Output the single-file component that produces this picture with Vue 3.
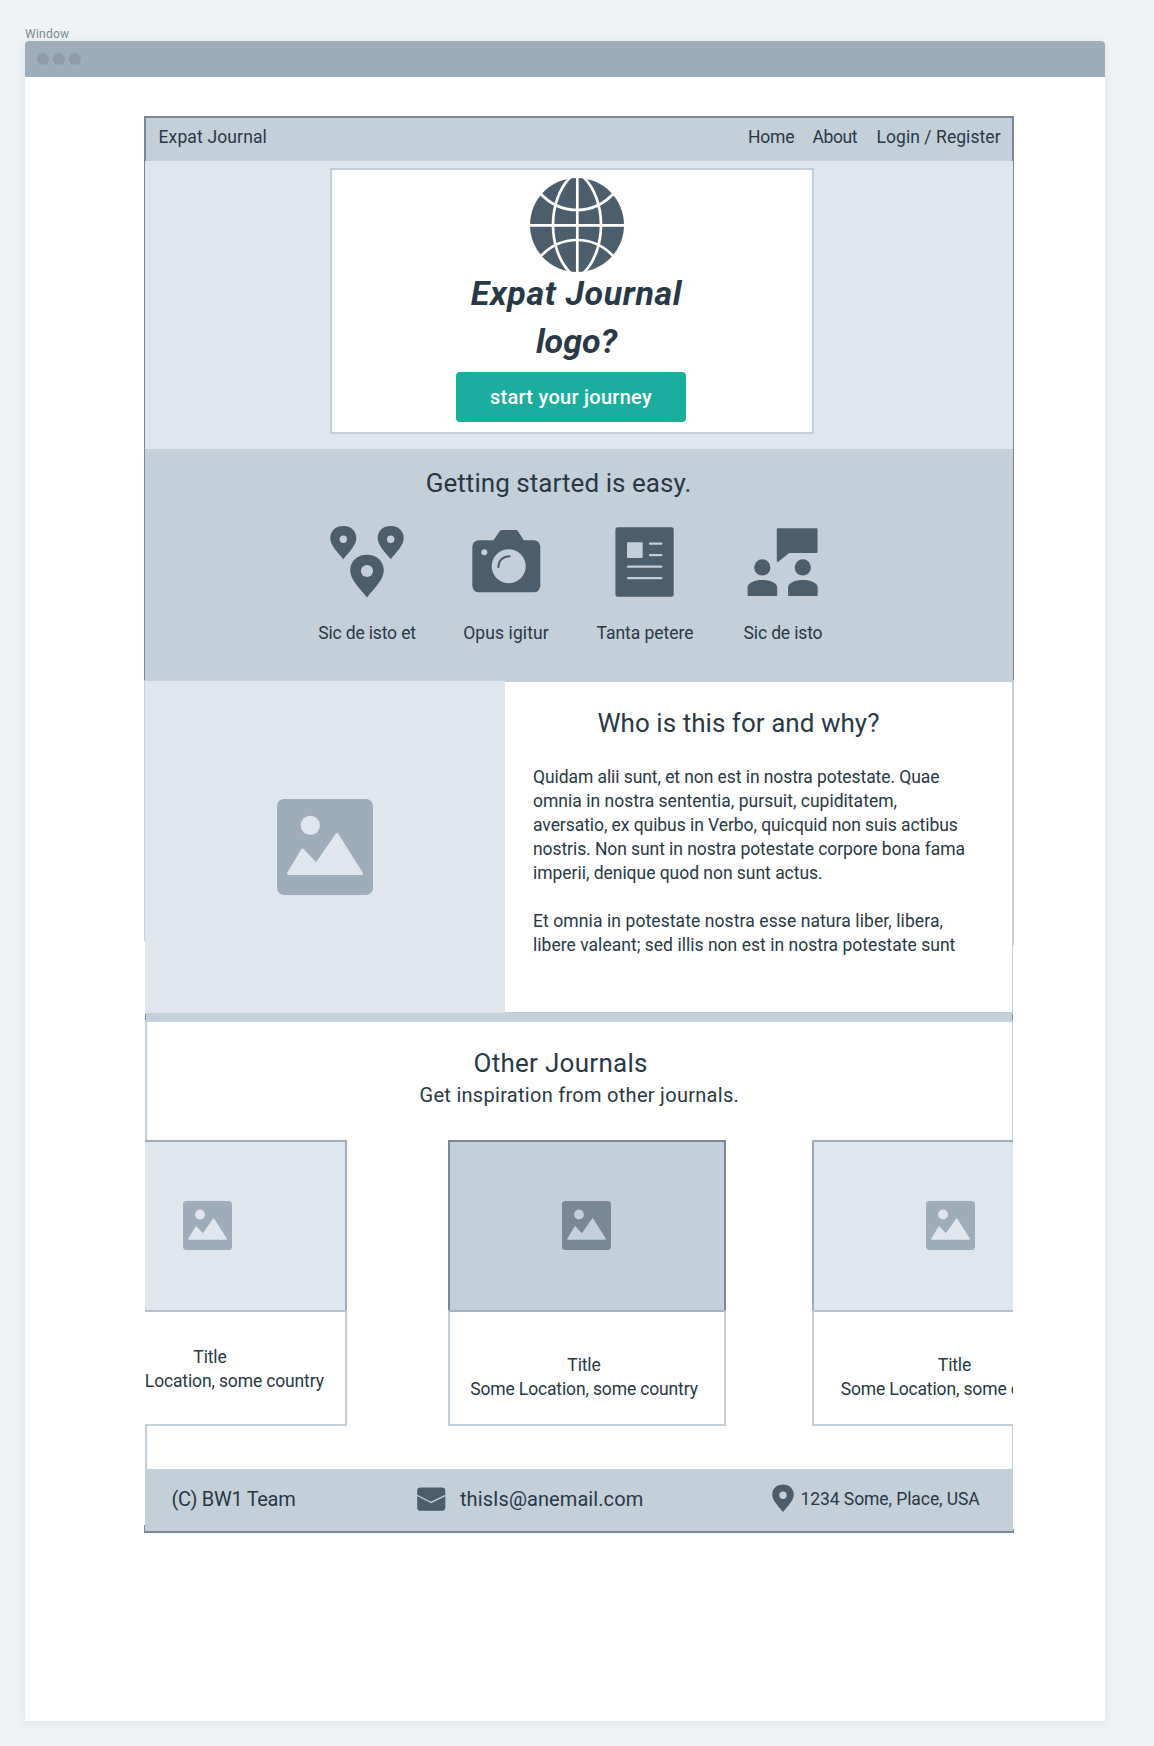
<script setup>
import { h } from 'vue'

const features = [
  { icon: 'places', label: 'Sic de isto et', spacing: -0.15 },
  { icon: 'camera', label: 'Opus igitur', spacing: 0.11 },
  { icon: 'article', label: 'Tanta petere', spacing: -0.03 },
  { icon: 'people', label: 'Sic de isto', spacing: -0.15 },
]

const paragraphs = [
  [
    { text: 'Quidam alii sunt, et non est in nostra potestate. Quae', spacing: -0.075 },
    { text: 'omnia in nostra sententia, pursuit, cupiditatem,', spacing: 0.02 },
    { text: 'aversatio, ex quibus in Verbo, quicquid non suis actibus', spacing: -0.063 },
    { text: 'nostris. Non sunt in nostra potestate corpore bona fama', spacing: -0.075 },
    { text: 'imperii, denique quod non sunt actus.', spacing: -0.03 },
  ],
  [
    { text: 'Et omnia in potestate nostra esse natura liber, libera,', spacing: 0.09 },
    { text: 'libere valeant; sed illis non est in nostra potestate sunt', spacing: 0.025 },
  ],
]

const journals = [
  { kind: 'previous', title: 'Title', place: 'Some Location, some country' },
  { kind: 'current', title: 'Title', place: 'Some Location, some country' },
  { kind: 'next', title: 'Title', place: 'Some Location, some country' },
]

const PIN = 'M0 42.7C-8 33-16.8 24.5-16.8 15.8C-16.8 6-9.5 0 0 0S16.8 6 16.8 15.8C16.8 24.5 8 33 0 42.7Z'
const BUST = 'M4.6 67.5C4.6 62.5 12 60 19.3 60S34.2 62.5 34.2 67.5V75.2Q34.2 76 33.4 76H5.4Q4.6 76 4.6 75.2Z'

const PictureIcon = () =>
  h('svg', { viewBox: '0 0 96 96' }, [
    h('rect', { width: 96, height: 96, rx: 7, fill: 'currentColor' }),
    h('circle', { cx: 33.3, cy: 26.4, r: 9.6, fill: 'var(--cut)' }),
    h('path', {
      d: 'M11.5 74.5L25.6 51L39.2 65.5L60 35.5L84.5 74.5Z',
      fill: 'var(--cut)',
      stroke: 'var(--cut)',
      'stroke-width': 3,
      'stroke-linejoin': 'round',
    }),
  ])
</script>

<template>
  <div class="canvas">
    <div class="window-label">Window</div>
    <div class="window">
      <div class="titlebar"><i></i><i></i><i></i></div>

      <div class="site">
        <nav class="nav">
          <span class="brand">Expat Journal</span>
          <a class="home">Home</a>
          <a class="about-link">About</a>
          <a class="login">Login / Register</a>
        </nav>

        <header class="hero">
          <div class="hero-card">
            <svg class="globe" viewBox="-47 -47 94 94">
              <circle r="47" fill="#4c5d6b" />
              <g fill="none" stroke="#fff" stroke-width="2.7">
                <path d="M0.3-48V48M-48 0.3H48" />
                <path d="M-6-48.5C-18-37-24-18-24 0S-18 37-6 48.5M6-48.5C18-37 24-18 24 0S18 37 6 48.5" />
                <path d="M-38-33C-27-20.5-14-15 0-15S27-20.5 38-33M-38 33C-27 20.5-14 15 0 15S27 20.5 38 33" />
              </g>
            </svg>
            <h1><span class="wide">Expat Journal</span><span>logo?</span></h1>
            <button type="button">start your journey</button>
          </div>
        </header>

        <section class="features">
          <h2>Getting started is easy.</h2>
          <div class="feature-row">
            <div v-for="f in features" :key="f.icon" class="feature">
              <svg v-if="f.icon === 'places'" viewBox="0 0 80 80">
                <g fill="#4c5d6b">
                  <path :d="PIN" transform="translate(16.3 6) scale(.776)" />
                  <path :d="PIN" transform="translate(63.7 6) scale(.776)" />
                  <path :d="PIN" transform="translate(40 34.8)" />
                </g>
                <g fill="#c3cfd9">
                  <circle cx="16.3" cy="19.3" r="3.7" />
                  <circle cx="63.7" cy="19.3" r="3.7" />
                  <circle cx="40" cy="51" r="6.1" />
                </g>
              </svg>
              <svg v-else-if="f.icon === 'camera'" viewBox="0 0 80 80">
                <rect x="6.3" y="20.3" width="68" height="52" rx="6.5" fill="#4c5d6b" />
                <path d="M27 21L33.6 11.3Q34.4 10 36 10H50Q51.3 10 52 11.2L58.3 21Z" fill="#4c5d6b" />
                <circle cx="42.7" cy="46.3" r="17" fill="#c3cfd9" />
                <circle cx="18.3" cy="32.3" r="3" fill="#c3cfd9" />
                <path d="M32.4 47.3C32.4 40.5 37 36.2 43.6 36.2" fill="none" stroke="#4c5d6b" stroke-width="2" stroke-linecap="round" />
              </svg>
              <svg v-else-if="f.icon === 'article'" viewBox="0 0 80 80">
                <rect x="10.4" y="7.3" width="58.3" height="69.4" rx="2.2" fill="#4c5d6b" />
                <rect x="22" y="22.3" width="15.7" height="15.7" rx="1" fill="#c3cfd9" />
                <path d="M45 23.7H56.4M45 35.1H56.4M23 46.7H56.4M23 58.1H56.4" stroke="#c3cfd9" stroke-width="2.3" stroke-linecap="round" />
              </svg>
              <svg v-else viewBox="0 0 80 80">
                <g fill="#4c5d6b">
                  <path d="M34.6 8.3H73.7Q74.5 8.3 74.5 9.1V32.2Q74.5 33 73.7 33H46.2L35.2 41.7Q33.8 42.4 33.8 41V9.1Q33.8 8.3 34.6 8.3Z" />
                  <circle cx="19.3" cy="47.4" r="8.1" />
                  <circle cx="59.8" cy="47.4" r="8.1" />
                  <path :d="BUST" />
                  <path :d="BUST" transform="translate(40.5 0)" />
                </g>
              </svg>
              <span :style="{ letterSpacing: f.spacing + 'px' }">{{ f.label }}</span>
            </div>
          </div>
        </section>

        <section class="about">
          <div class="about-picture"><PictureIcon class="picture-lg" /></div>
          <div class="about-copy">
            <h2>Who is this for and why?</h2>
            <p v-for="(lines, i) in paragraphs" :key="i">
              <span v-for="line in lines" :key="line.text" :style="{ letterSpacing: line.spacing + 'px' }">{{ line.text }}</span>
            </p>
          </div>
        </section>

        <div class="band"></div>

        <section class="others">
          <h2>Other Journals</h2>
          <p class="lead">Get inspiration from other journals.</p>
          <div class="carousel">
            <article v-for="j in journals" :key="j.kind" class="card" :class="j.kind">
              <div class="card-picture"><PictureIcon class="picture-sm" /></div>
              <div class="card-body">
                <div>{{ j.title }}</div>
                <div>{{ j.place }}</div>
              </div>
            </article>
          </div>
        </section>

        <footer class="footer">
          <span class="copyright">(C) BW1 Team</span>
          <svg class="mail" viewBox="0 0 28.5 24">
            <rect x="0.2" y="0.5" width="28.1" height="23.3" rx="3.4" fill="#4c5d6b" />
            <path d="M0 8.3L14.2 15.5L28.5 8.3" fill="none" stroke="#c3cfd9" stroke-width="1.4" />
          </svg>
          <span class="email">thisIs@anemail.com</span>
          <svg class="pin" viewBox="0 0 22 28">
            <path :d="PIN" transform="translate(11 .6) scale(.64)" fill="#4c5d6b" />
            <circle cx="11" cy="11.3" r="3.7" fill="#c3cfd9" />
          </svg>
          <span class="address">1234 Some, Place, USA</span>
        </footer>
      </div>
    </div>
  </div>
</template>

<style>
body {
  margin: 0;
  background: #eff3f6;
}
</style>

<style scoped>
.canvas {
  box-sizing: border-box;
  width: 1154px;
  height: 1746px;
  padding: 26px 49px 0 25px;
  overflow: hidden;
  background: #eff3f6;
  color: #293845;
  font: 17.5px/24px Roboto, "Liberation Sans", sans-serif;
  white-space: nowrap;
}
.canvas * {
  box-sizing: border-box;
}
svg {
  display: block;
  flex: none;
}
h1,
h2,
p {
  margin: 0;
}
h2 {
  font-size: 26px;
  line-height: 32px;
  font-weight: 400;
}
.window-label {
  height: 15px;
  font-size: 12px;
  line-height: 17px;
  letter-spacing: 0.24px;
  color: #788896;
}
.window {
  height: 1680px;
  border-radius: 4px 4px 0 0;
  background: #fff;
  box-shadow: 0 2px 10px rgba(40, 56, 69, 0.08);
}
.titlebar {
  display: flex;
  align-items: center;
  gap: 4px;
  height: 36px;
  padding-left: 12px;
  border-radius: 4px 4px 0 0;
  background: #9eadba;
}
.titlebar i {
  width: 12px;
  height: 12px;
  border-radius: 50%;
  background: #8c9cab;
}
.site {
  width: 870px;
  margin: 39px 0 0 119px;
}

.nav {
  display: flex;
  height: 45px;
  padding: 7px 0 0 12.5px;
  border: solid #788896;
  border-width: 2px 2px 0;
  background: #c3cfd9;
}
.brand {
  width: 589.5px;
  letter-spacing: 0.14px;
}
.home {
  width: 64.5px;
  letter-spacing: -0.2px;
}
.about-link {
  width: 64px;
  letter-spacing: -0.4px;
}
.login {
  letter-spacing: 0.06px;
}

.hero {
  height: 288px;
  padding: 7px 0 0 185px;
  border: solid #788896;
  border-width: 0 1px;
  background: #dfe6ee;
}
.hero-card {
  display: flex;
  flex-direction: column;
  align-items: center;
  width: 484px;
  height: 266px;
  border: 2px solid #c3cfd9;
  background: #fff;
}
.globe {
  width: 94px;
  height: 94px;
  margin: 8px 0 0 10px;
}
h1 {
  margin: -3px 0 0 9px;
  font-size: 34px;
  line-height: 48px;
  font-style: italic;
  font-weight: 700;
  text-align: center;
}
h1 span {
  display: block;
}
.wide {
  letter-spacing: 0.6px;
}
button {
  width: 230px;
  height: 50px;
  margin: 7px 2px 0 0;
  padding: 0;
  border: 0;
  border-radius: 4px;
  background: #1bae9f;
  color: #fff;
  font: 500 20px/50px Roboto, "Liberation Sans", sans-serif;
  letter-spacing: 0.27px;
}

.features {
  height: 231px;
  padding-top: 18px;
  border: solid #788896;
  border-width: 0 1px;
  background: #c3cfd9;
}
.features h2 {
  margin-left: 280.7px;
  letter-spacing: 0.05px;
}
.feature-row {
  display: flex;
  margin: 21px 0 0 152.5px;
}
.feature {
  display: flex;
  flex-direction: column;
  align-items: center;
  width: 139px;
}
.feature:last-child {
  width: 137px;
}
.feature svg {
  width: 80px;
  height: 80px;
  margin-bottom: 21px;
}

.about {
  position: relative;
  display: flex;
  height: 332px;
  padding: 0 1px;
}
.about::before,
.about::after {
  content: "";
  position: absolute;
  top: 0;
  left: 0;
  width: 1px;
  height: 261px;
  background: #c3cfd9;
}
.about::after {
  right: 0;
  left: auto;
  height: 265px;
}
.about-picture {
  --cut: #dfe6ee;
  position: relative;
  z-index: 1;
  display: flex;
  justify-content: center;
  align-items: center;
  width: 360px;
  height: 333px;
  border-top: 1px solid #c3cfd9;
  background: #dfe6ee;
  color: #9eadba;
}
.picture-lg {
  width: 96px;
  height: 96px;
}
.about-copy {
  width: 508px;
  padding: 25px 0 0 28px;
  border: solid #c3cfd9;
  border-width: 2px 1px 0 0;
}
.about-copy h2 {
  margin: 0 0 26px 64.5px;
  letter-spacing: 0.04px;
}
.about-copy p + p {
  margin-top: 24px;
}
.about-copy span {
  display: block;
}

.band {
  display: flex;
  justify-content: space-between;
  align-items: center;
  height: 10px;
  margin: 0 1px;
  background: #c3cfd9;
}
.band::before,
.band::after {
  content: "";
  width: 1px;
  height: 6px;
  background: #788896;
}

.others {
  height: 447px;
  margin: 0 1px;
  padding-top: 25px;
  border: solid #c3cfd9;
  border-width: 0 1px 0 2px;
}
.others h2 {
  margin-left: 326.5px;
  letter-spacing: 0.28px;
}
.lead {
  margin: 4px 0 0 272.5px;
  font-size: 20px;
  letter-spacing: 0.286px;
}
.carousel {
  display: flex;
  width: 868px;
  margin: 33px 0 0 -2px;
  overflow: hidden;
  background: #fff;
}
.card {
  flex: none;
  width: 278px;
}
.previous {
  margin-left: -76px;
}
.current {
  margin: 0 86px 0 101px;
}
.card-picture {
  --cut: #dfe6ee;
  display: flex;
  justify-content: center;
  align-items: center;
  height: 170px;
  padding: 0 2px 1px 0;
  border: solid #9eadba;
  border-width: 2px 2px 0;
  background: #dfe6ee;
  color: #9eadba;
}
.current .card-picture {
  --cut: #c3cfd9;
  padding-right: 1px;
  border-color: #788896;
  background: #c3cfd9;
  color: #788896;
}
.picture-sm {
  width: 49px;
  height: 49px;
}
.card-body {
  height: 116px;
  padding-top: 41px;
  border: 2px solid #c3cfd9;
  border-top-color: #b5c2cd;
  text-align: center;
  letter-spacing: -0.14px;
}
.current .card-body {
  padding-right: 6px;
  border-top-color: #a4b2bf;
}
.previous .card-body {
  padding-top: 33px;
  padding-left: 4px;
}
.next .card-body {
  padding-left: 7px;
}

.footer {
  position: relative;
  display: flex;
  align-items: flex-start;
  height: 64px;
  padding: 18px 0 0 27.5px;
  border-bottom: 2px solid #788896;
  background: linear-gradient(#c3cfd9, #c3cfd9) 1px 0 / 868px 100% no-repeat;
}
.footer::before,
.footer::after {
  content: "";
  position: absolute;
  bottom: 0;
  left: 0;
  width: 1px;
  height: 6px;
  background: #788896;
}
.footer::after {
  right: 0;
  left: auto;
  height: 2px;
}
.copyright {
  width: 245.5px;
  font-size: 20px;
  letter-spacing: -0.3px;
}
.mail {
  width: 28.5px;
  height: 24px;
}
.email {
  width: 312px;
  margin: 0 -14.5px 0 14.5px;
  font-size: 20px;
  letter-spacing: 0.08px;
}
.pin {
  width: 22px;
  height: 28px;
  margin: -3px 0 0 14px;
}
.address {
  margin-left: 7px;
  letter-spacing: -0.07px;
}
</style>
